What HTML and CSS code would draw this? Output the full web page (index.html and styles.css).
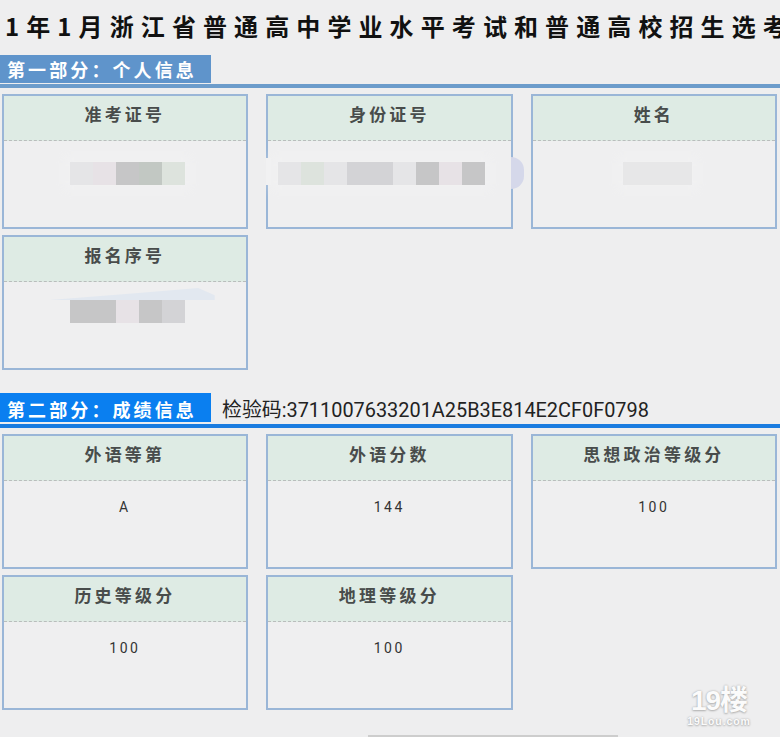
FILE: index.html
```html
<!DOCTYPE html>
<html lang="zh-CN">
<head>
<meta charset="utf-8">
<title>成绩信息</title>
<link rel="stylesheet" href="styles.css">
</head>
<body>
<main class="page">
  <h1 class="title">1年1月浙江省普通高中学业水平考试和普通高校招生选考</h1>

  <section class="section section-one">
    <div class="section-head"><h2 class="badge">第一部分：个人信息</h2></div>
    <div class="cards">
      <article class="card">
        <h3 class="card-title">准考证号</h3>
        <div class="card-body">
          <div class="mosaic"><i class="m1"></i><i class="m2"></i><i class="m5"></i><i class="m6"></i><i class="m3"></i></div>
        </div>
      </article>
      <article class="card card-id">
        <h3 class="card-title">身份证号</h3>
        <div class="card-body">
          <div class="mosaic"><i class="m1"></i><i class="m3"></i><i class="m1"></i><i class="m4"></i><i class="m4"></i><i class="m1"></i><i class="m5"></i><i class="m2"></i><i class="m5"></i></div>
        </div>
      </article>
      <article class="card card-name">
        <h3 class="card-title">姓名</h3>
        <div class="card-body">
          <div class="mosaic"><i class="m7"></i><i class="m7"></i><i class="m7"></i></div>
        </div>
      </article>
      <article class="card card-serial">
        <h3 class="card-title">报名序号</h3>
        <div class="card-body">
          <div class="mosaic"><i class="m5"></i><i class="m5"></i><i class="m2"></i><i class="m5"></i><i class="m4"></i></div>
        </div>
      </article>
    </div>
  </section>

  <section class="section section-two">
    <div class="section-head">
      <h2 class="badge">第二部分：成绩信息</h2>
      <span class="code">检验码:3711007633201A25B3E814E2CF0F0798</span>
    </div>
    <div class="cards">
      <article class="card"><h3 class="card-title">外语等第</h3><div class="card-body"><span class="value">A</span></div></article>
      <article class="card"><h3 class="card-title">外语分数</h3><div class="card-body"><span class="value">144</span></div></article>
      <article class="card"><h3 class="card-title">思想政治等级分</h3><div class="card-body"><span class="value">100</span></div></article>
      <article class="card"><h3 class="card-title">历史等级分</h3><div class="card-body"><span class="value">100</span></div></article>
      <article class="card"><h3 class="card-title">地理等级分</h3><div class="card-body"><span class="value">100</span></div></article>
    </div>
  </section>
</main>

<div class="watermark"><span class="wm-big">19楼</span><span class="wm-small">19Lou.com</span></div>
<div class="scrollbar"></div>
</body>
</html>
```

FILE: styles.css
```css
* { box-sizing: border-box; }

html, body {
  margin: 0;
  width: 780px;
  height: 737px;
  overflow: hidden;
  background: #eeeeef;
  font-family: "Noto Sans CJK SC", "Roboto", sans-serif;
}

.page { display: flex; flex-direction: column; }

.title {
  margin: 0;
  height: 55px;
  padding: 8px 0 0 5px;
  font-size: 24px;
  line-height: 36px;
  font-weight: 700;
  letter-spacing: 7.1px;
  white-space: nowrap;
  overflow: hidden;
  color: #111;
}

.section-head {
  display: flex;
  align-items: center;
  height: 33px;
  border-bottom: 4px solid #6c9ccb;
  padding-bottom: 1px;
}

.badge {
  margin: 0;
  width: 211px;
  height: 28px;
  padding-left: 7px;
  background: #5f94cb;
  color: #fff;
  font-size: 18px;
  line-height: 29px;
  font-weight: 700;
  letter-spacing: 3.1px;
  white-space: nowrap;
}

.section-two { margin-top: 22px; }
.section-two .section-head { border-bottom-color: #1a7ce0; height: 36px; }
.section-two .badge { background: #0a7ff0; height: 29px; line-height: 32px; }

.code {
  margin-left: 11px;
  padding-top: 6px;
  font-family: "Roboto", "Noto Sans CJK SC", sans-serif;
  font-size: 19.9px;
  line-height: 28px;
  color: #222;
  white-space: nowrap;
}

.cards {
  display: grid;
  grid-template-columns: repeat(3, 246.4px);
  column-gap: 18.1px;
  row-gap: 6px;
  padding: 6px 0 0 1.7px;
}

.card {
  position: relative;
  height: 135px;
  border: 2px solid #9ab6d7;
  display: flex;
  flex-direction: column;
}

.card-title {
  margin: 0;
  height: 45px;
  background: #deebe4;
  border-bottom: 1px dashed #b9bdbc;
  text-align: center;
  font-size: 17px;
  line-height: 36px;
  font-weight: 700;
  letter-spacing: 3.2px;
  color: #484c4b;
  white-space: nowrap;
}

.card-body {
  flex: 1;
  padding-top: 21px;
  display: flex;
  justify-content: center;
  align-items: flex-start;
  background: #efeff0;
}

.value {
  font-family: "Roboto", sans-serif;
  font-size: 14px;
  line-height: 20px;
  letter-spacing: 2.6px;
  color: #333;
  margin-top: -5px;
}

.mosaic {
  display: flex;
  height: 23px;
  margin-left: 5px;
  box-shadow: 0 0 10px 6px #f1f1f2;
}

.card-id .mosaic { margin: 0 16px 0 0; }
.card-name .mosaic { margin-left: 8px; }

.mosaic i { display: block; width: 23px; height: 23px; }
.m1 { background: #e5e5e7; }
.m2 { background: #e7e2e6; }
.m3 { background: #dde3dd; }
.m4 { background: #d3d3d6; }
.m5 { background: #c6c6c7; }
.m6 { background: #c2c8c3; }
.m7 { background: #e7e7e8; }

.card-id::before {
  content: "";
  position: absolute;
  left: -2px;
  top: 62px;
  width: 5px;
  height: 27px;
  background: #f1f1f2;
}

.card-id::after {
  content: "";
  position: absolute;
  right: -13px;
  top: 61px;
  width: 13px;
  height: 32px;
  background: #d5d8ea;
  border-radius: 0 16px 16px 0;
}

.card-serial .card-body { padding-top: 18px; position: relative; }

.card-serial .card-body::before {
  content: "";
  position: absolute;
  left: 46px;
  top: 6px;
  width: 165px;
  height: 12px;
  background: #e2e8f0;
  clip-path: polygon(0 100%, 50% 45%, 90% 0, 100% 60%, 100% 100%);
}

.card-serial .mosaic { position: relative; box-shadow: none; }

.watermark {
  position: absolute;
  left: 685px;
  top: 686px;
  width: 68px;
  display: flex;
  flex-direction: column;
  align-items: center;
  color: #fbfbfb;
  text-shadow: 0 0 2px #a8a8a8, 0 1px 2px #b8b8b8;
  font-family: "Liberation Sans", "Noto Sans CJK SC", sans-serif;
  font-weight: 700;
}

.wm-big { font-size: 28px; line-height: 30px; letter-spacing: -1px; white-space: nowrap; }
.wm-small { font-size: 10.5px; line-height: 11px; letter-spacing: 0.9px; white-space: nowrap; }

.scrollbar {
  position: absolute;
  left: 368px;
  top: 735px;
  width: 250px;
  height: 2px;
  background: #cdcdcd;
}
```
